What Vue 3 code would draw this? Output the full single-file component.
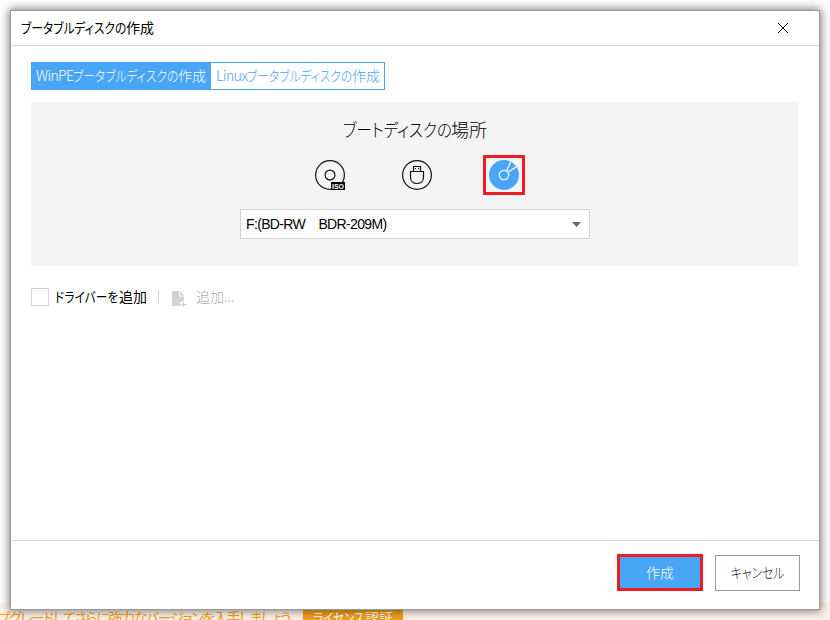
<script setup>
import { ref } from 'vue'

const driver = ref(false)
</script>

<template>
  <div class="desktop">
    <div class="promo">
      <span class="promo-text">ップグレードしてさらに強力なバージョンを入手しましょう</span>
      <span class="license"><span class="kana lic">ライセンス</span>認証</span>
    </div>
    <section class="dialog">
      <header class="titlebar">
        <h1 class="t"><span class="kana disc">ブータブルディスクの</span>作成</h1>
        <svg class="close" width="12" height="12" viewBox="0 0 12 12"><path d="M1 1L11 11M11 1L1 11" /></svg>
      </header>
      <main class="content">
        <nav class="tabs">
          <button class="tab active"><span class="t"><span class="win">WinPE</span><span class="kana disc">ブータブルディスクの</span>作成</span></button>
          <button class="tab"><span class="t"><span class="linux">Linux</span><span class="kana disc">ブータブルディスクの</span>作成</span></button>
        </nav>
        <section class="panel">
          <h2 class="t heading"><span class="kana place">ブートディスクの</span>場所</h2>
          <div class="media">
            <div class="medium">
              <svg width="32" height="32" viewBox="0 0 32 32">
                <circle class="line" cx="16" cy="16" r="14.4" />
                <circle class="line" cx="16" cy="16" r="4.9" />
                <rect x="17" y="23" width="14" height="8" fill="#000" />
                <text x="24" y="29.6" class="iso">ISO</text>
              </svg>
            </div>
            <div class="medium">
              <svg width="32" height="32" viewBox="0 0 32 32">
                <circle class="line" cx="16" cy="16" r="14.4" />
                <path class="line" d="M9.5 12.5H22.5V18C22.5 22 19.8 24.5 16 24.5S9.5 22 9.5 18ZM12.5 12.5V7.5H19.5V12.5" />
                <path d="M14 9h1v1h-1zM17 9h1v1h-1z" />
              </svg>
            </div>
            <div class="medium selected">
              <svg width="32" height="32" viewBox="0 0 32 32">
                <circle cx="16" cy="16" r="15" fill="#49a5f5" />
                <circle class="white" cx="16" cy="16" r="4.7" />
                <path class="white" d="M18.6 12L22.8 2.5M20 13.2L28.8 7.6" />
              </svg>
            </div>
          </div>
          <div class="select">
            <span class="t drive">F:(BD-RW　BDR-209M)</span>
            <svg width="9" height="5" viewBox="0 0 9 5"><path d="M0 0H9L4.5 5Z" fill="#666" /></svg>
          </div>
        </section>
        <div class="drivers">
          <label class="check"><input v-model="driver" type="checkbox" /><span class="t"><span class="kana driver">ドライバーを</span>追加</span></label>
          <i class="sep"></i>
          <svg class="file" width="16" height="17" viewBox="0 0 16 17">
            <path d="M0 0H7V5.5H12V10H10V11H8V14H9V15H0Z" fill="#d3d3d3" />
            <path d="M8 0L12 4.5H8Z" fill="#d3d3d3" />
            <path d="M11.5 11V16M9 13.5H14" stroke="#ccc" />
          </svg>
          <span class="t add">追加...</span>
        </div>
      </main>
      <footer class="footer">
        <button class="btn primary"><span class="t">作成</span></button>
        <button class="btn"><span class="t"><span class="kana cancel">キャンセル</span></span></button>
      </footer>
    </section>
  </div>
</template>

<style>
body { margin: 0; background: #fff; }
</style>

<style scoped>
* { box-sizing: border-box; }
.desktop {
  position: relative;
  width: 830px;
  height: 620px;
  padding: 10px;
  overflow: hidden;
  background: linear-gradient(#fff 603px, #fef3e9 603px);
  font-family: "Noto Sans CJK JP", sans-serif;
  font-size: 14px;
  font-weight: 300;
  color: #000;
}
.t {
  display: flex;
  white-space: pre;
  line-height: 20px;
  padding-bottom: 2px;
  font-feature-settings: "palt";
}
.kana { display: block; transform: scaleX(.84); transform-origin: left center; }
.disc { width: 105px; }
.place { width: 108px; transform: scaleX(.86); }
.driver { width: 64px; }
.cancel { width: 54px; }
.win { width: 37px; letter-spacing: -.6px; }
.linux { width: 31px; letter-spacing: -.5px; }
.dialog {
  position: relative;
  display: flex;
  flex-direction: column;
  width: 810px;
  height: 600px;
  background: #fff;
  border: 1px solid #999;
  box-shadow: 0 0 9px 1px rgba(0, 0, 0, .52);
}
.titlebar {
  display: flex;
  align-items: center;
  justify-content: space-between;
  height: 35px;
  padding: 0 30px 0 10px;
  border-bottom: 1px solid #dadada;
}
h1, h2 { margin: 0; font-size: 14px; font-weight: 300; }
h1, .check { font-weight: 400; }
.close path { fill: none; stroke: #000; stroke-width: 1; }
.content { flex: 1; padding: 16px 20px 0; }
.tabs { display: flex; width: 354px; height: 28px; margin-bottom: 12px; border: 1px solid #49a5f5; }
.tab {
  display: flex;
  align-items: center;
  padding: 0 0 0 5px;
  border: 0;
  background: #fff;
  color: #49a5f5;
  font: inherit;
  flex: 1;
}
.tab.active { flex: 0 0 179px; padding-left: 4px; background: #49a5f5; color: #fff; }
.panel {
  display: flex;
  flex-direction: column;
  align-items: center;
  height: 164px;
  padding-top: 15px;
  background: #f4f4f4;
}
.panel .heading { font-size: 18px; line-height: 24px; }
.media { display: flex; gap: 45px; margin: 12px 0 0 4px; }
.medium { display: grid; place-items: center; width: 42px; height: 40px; }
.selected { border: 3px solid #ee1c25; }
.line { fill: none; stroke: #111; stroke-width: 1.2; }
.white { fill: none; stroke: #fff; stroke-width: 1.2; }
.iso { font: 700 7px "Liberation Sans", sans-serif; fill: #fff; text-anchor: middle; }
.select {
  display: flex;
  align-items: center;
  justify-content: space-between;
  width: 350px;
  height: 30px;
  margin-top: 14px;
  padding: 0 8px 0 5px;
  background: #fff;
  border: 1px solid #d3d3d3;
}
.drive { padding: 0; font-family: "Liberation Sans", "Noto Sans CJK JP", sans-serif; letter-spacing: -.65px; }
.drivers { display: flex; align-items: center; height: 20px; margin-top: 21px; }
.check { display: flex; align-items: center; gap: 6px; width: 127px; }
.check input { appearance: none; width: 18px; height: 18px; margin: 0; border: 1px solid #d3d3d3; background: #fff; }
.sep { width: 1px; height: 14px; background: #d3d3d3; }
.file { margin: 4px 0 0 13px; }
.add { margin-left: 8px; color: #aaa; }
.footer {
  display: flex;
  justify-content: flex-end;
  align-items: flex-start;
  gap: 12px;
  height: 69px;
  padding: 13px 19px 0;
  border-top: 1px solid #dadada;
}
.btn {
  display: grid;
  place-items: center;
  width: 86px;
  height: 37px;
  padding: 0;
  border: 1px solid #999;
  background: #fff;
  color: #222;
  font: inherit;
}
.btn.primary { border: 3px solid #ee1c25; background: #49a5f5; color: #fff; }
.btn:not(.primary) { width: 85px; height: 36px; margin-top: 1px; }
.promo {
  position: absolute;
  left: 0;
  top: 603px;
  display: flex;
  justify-content: space-between;
  width: 403px;
  height: 28px;
  color: #f5a11c;
  white-space: nowrap;
  line-height: 28px;
  font-weight: 400;
  font-feature-settings: "palt";
}
.promo-text { display: flex; justify-content: flex-end; width: 290px; letter-spacing: -1.4px; }
.license { display: flex; width: 100px; padding-left: 10px; background: #f1a01e; color: #fff; }
.lic { width: 52px; transform: scaleX(.82); }
</style>
